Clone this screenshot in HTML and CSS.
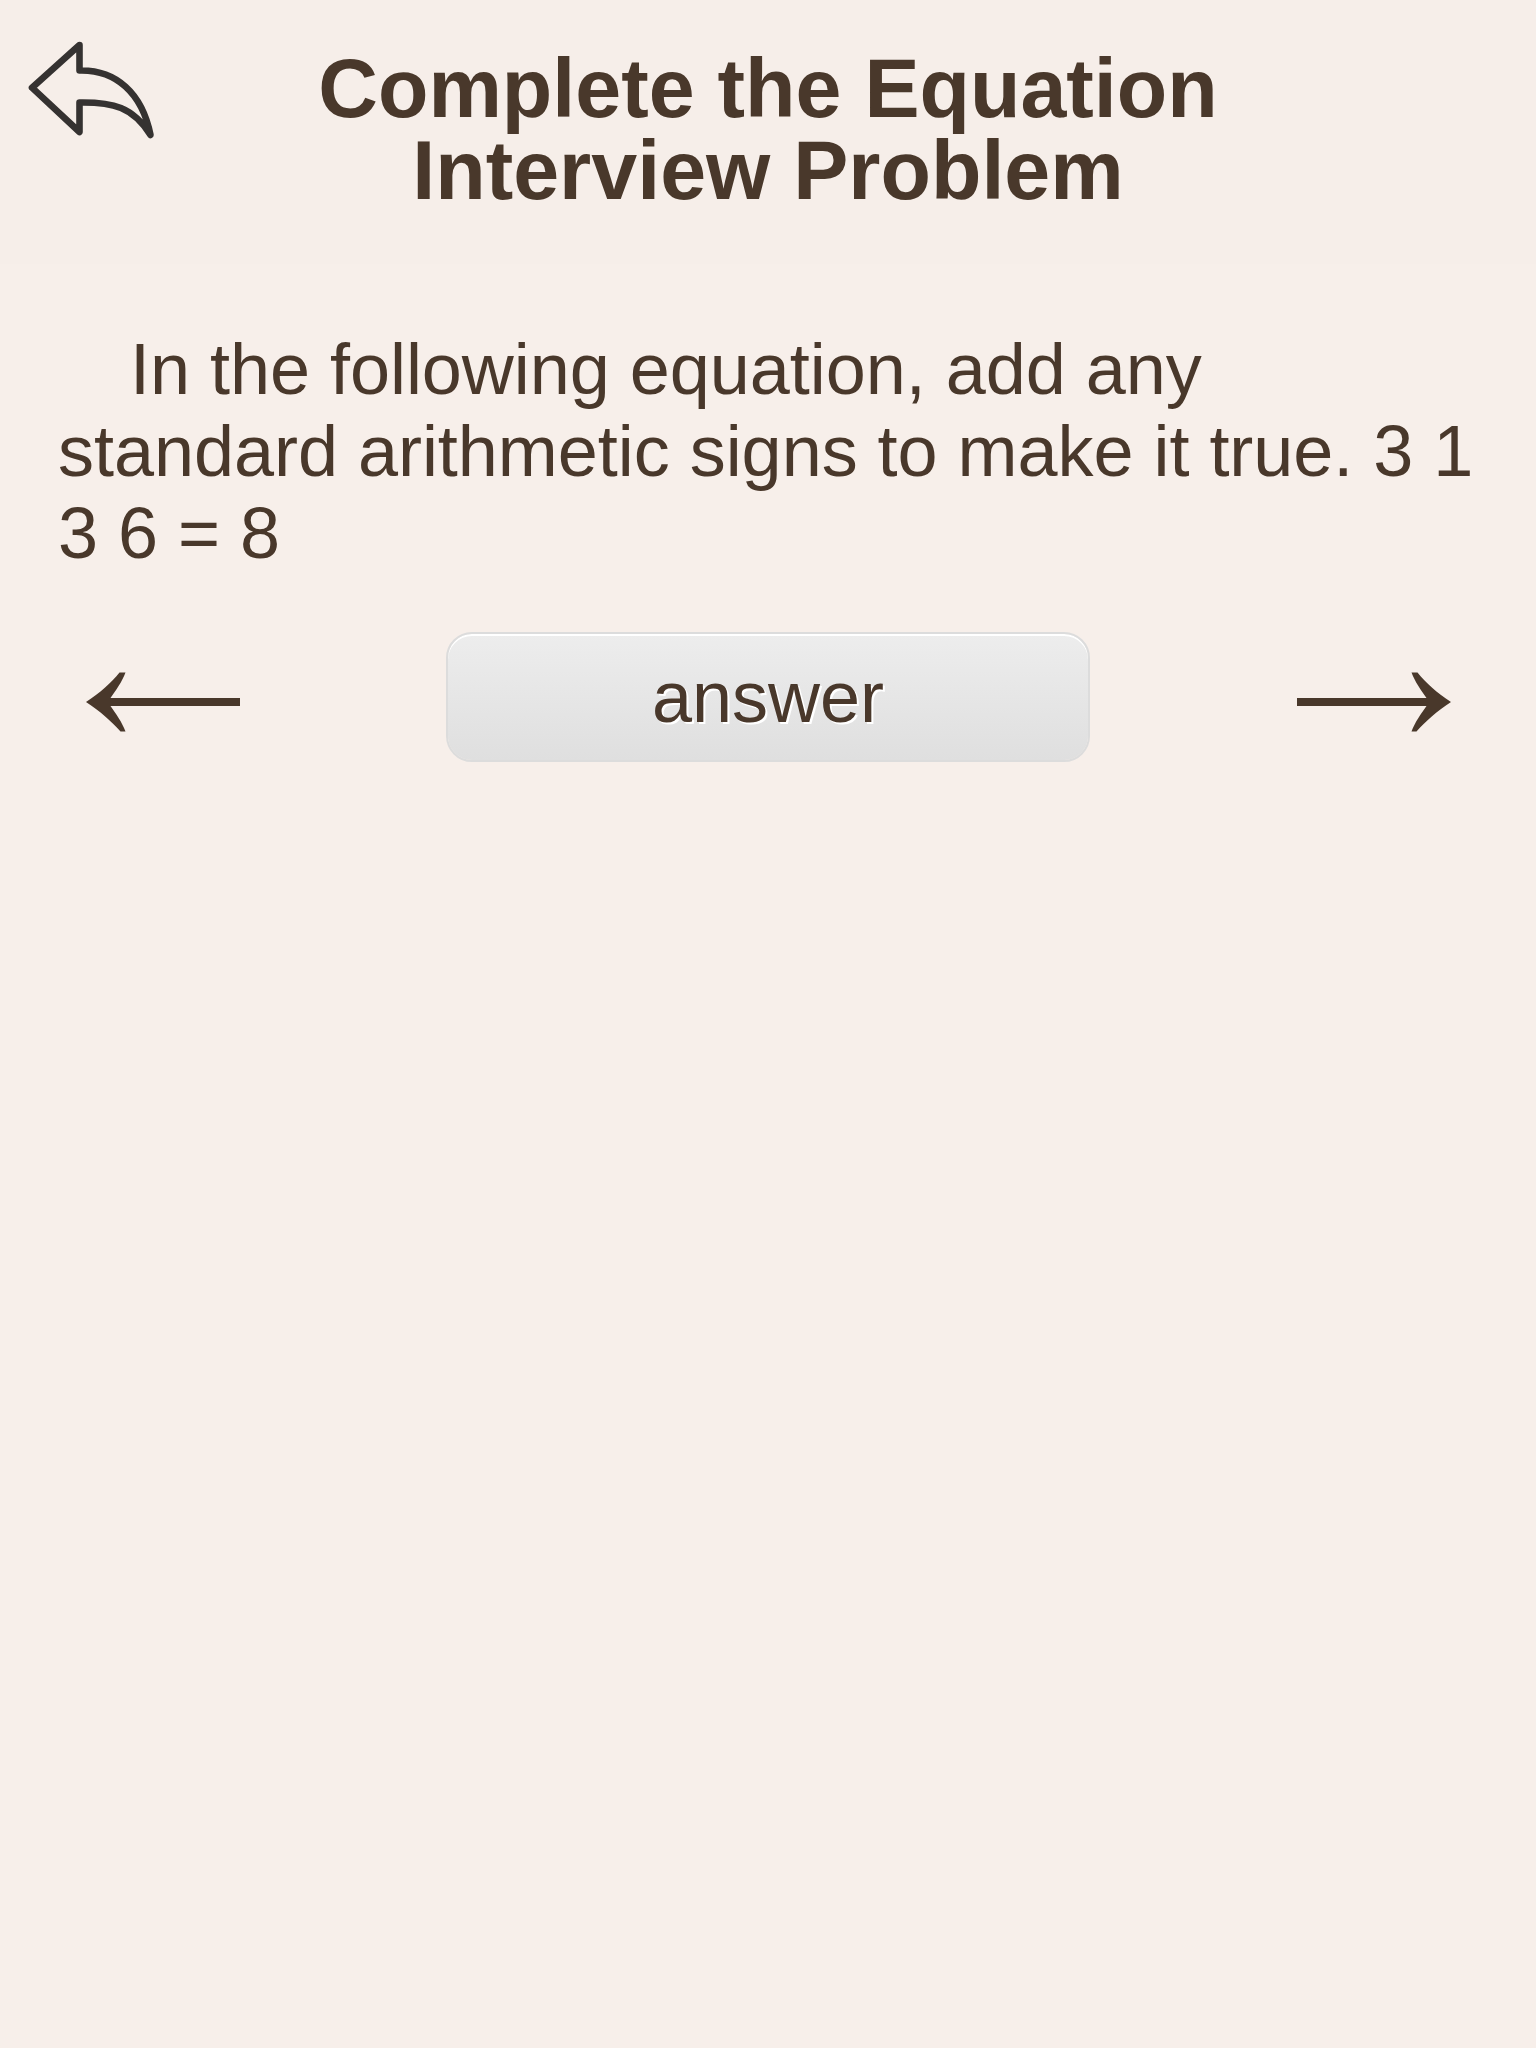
FILE: index.html
```html
<!DOCTYPE html>
<html lang="en">
<head>
<meta charset="utf-8">
<title>Interview Problem</title>
<link rel="stylesheet" href="styles.css">
</head>
<body>
<header class="header">
  <a class="back" aria-label="Back">
    <svg width="180" height="160" viewBox="0 0 180 160"><path d="M79.500 45 32 87.700 79.500 132V102.500C113 102 133 107 150.500 135C142 93 116 69.500 79.500 70.500Z" fill="none" stroke="#353231" stroke-width="6.600" stroke-linejoin="round"/></svg>
  </a>
  <h1 class="title">Complete the Equation<br>Interview Problem</h1>
</header>
<main class="content">
  <p class="question">In the following equation, add any standard arithmetic signs to make it true. 3 1 3 6 = 8</p>
  <nav class="controls">
    <a class="arrow" aria-label="Previous">
      <svg width="156" height="64" viewBox="0 0 156 64"><path id="arrow" d="M1 32C15 23 26 13 34.500 2.500H40.500C37 12 31 20 25.500 28H155V36H25.500C31 44 37 52 40.500 61.500H35.500C26 51 15 41 1 32Z"/></svg>
    </a>
    <button class="answer">answer</button>
    <a class="arrow" aria-label="Next">
      <svg width="156" height="64" viewBox="0 0 156 64"><use href="#arrow" transform="translate(157 0) scale(-1 1)"/></svg>
    </a>
  </nav>
</main>
</body>
</html>
```
FILE: styles.css
```css
* { box-sizing: border-box; }
body {
  margin: 0;
  min-height: 100vh;
  background: #f7efea;
  color: #49382b;
  font-family: "Liberation Sans", Arial, sans-serif;
}
.header {
  display: grid;
  grid-template-columns: 180px 1fr 180px;
  height: 264px;
  background: #f6eee9;
}
.back svg, .arrow svg { display: block; }
.title {
  margin: 48px 0 0;
  font-size: 82.6px;
  line-height: 82px;
  text-align: center;
  white-space: nowrap;
}
.content { padding: 64px 58px 0; }
.question {
  margin: 0;
  font-size: 72px;
  line-height: 82px;
  letter-spacing: -0.03px;
  text-indent: 72px;
}
.controls {
  display: flex;
  align-items: center;
  justify-content: space-between;
  margin-top: 58px;
  padding: 0 27px;
}
.arrow { padding-top: 10px; }
.arrow svg { fill: #49382b; overflow: visible; }
.answer {
  width: 644px;
  height: 130px;
  padding: 0;
  border: 2px solid #dcdcdc;
  border-radius: 26px;
  background: linear-gradient(#ededed, #dfdfdf) padding-box;
  box-shadow: inset 0 2px 0 #fff;
  color: inherit;
  font: 72px "Liberation Sans", Arial, sans-serif;
  text-shadow: 2px 2px 0 #fff;
}
```
